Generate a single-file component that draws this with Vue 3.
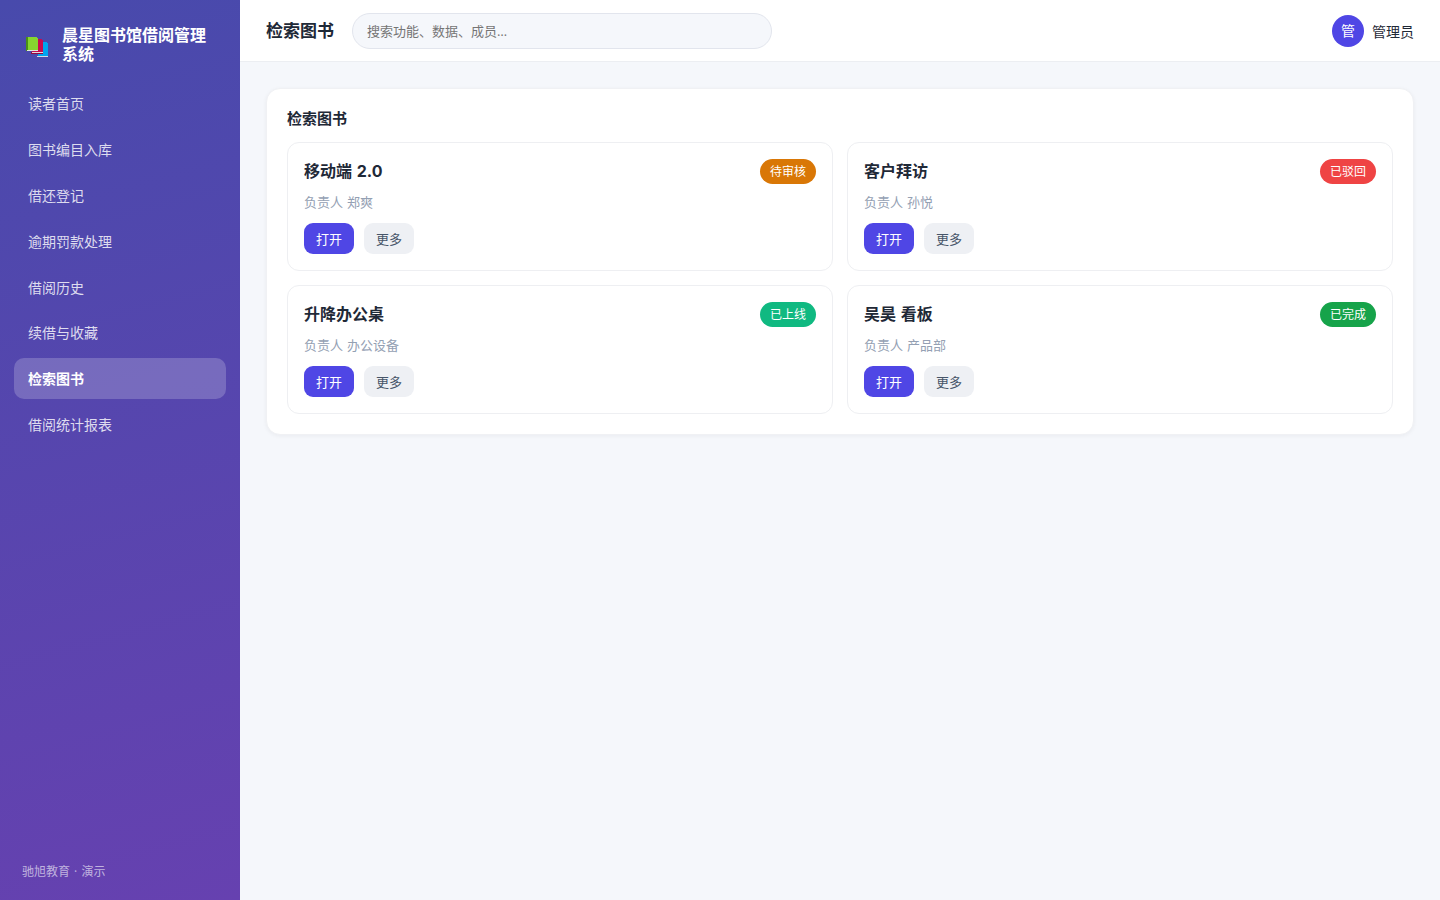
<template>
  <div class="layout">
    <aside class="sidebar">
      <div class="brand">
        <svg class="brand-logo" viewBox="0 0 22 20" width="22" height="20" shape-rendering="crispEdges">
          <path d="M12 5h9v1h1v13H12z" fill="#00a4ef"/>
          <path d="M11 19h11v1H11z" fill="#d5d9e2"/>
          <path d="M6 2h10v1h1v12H6z" fill="#c80a50"/>
          <path d="M5 15h12v2H5z" fill="#930b3d"/>
          <path d="M6 15h11v1H6z" fill="#e2dadd"/>
          <path d="M0 0h2v14H0z" fill="#498f16"/>
          <path d="M2 0h9v1h1v13H2z" fill="#86d62f"/>
          <path d="M1 13h11v1H1z" fill="#e3e8e1"/>
        </svg>
        <span class="brand-name">晨星图书馆借阅管理系统</span>
      </div>
      <nav class="menu">
        <a v-for="m in menus" :key="m" class="menu-item" :class="{ active: m === current }" @click="current = m">{{ m }}</a>
      </nav>
      <div class="sidebar-foot">驰旭教育 · 演示</div>
    </aside>

    <div class="main">
      <header class="topbar">
        <h1 class="topbar-title">{{ current }}</h1>
        <input v-model="keyword" class="search" placeholder="搜索功能、数据、成员…" />
        <div class="user">
          <span class="avatar">管</span>
          <span class="user-name">管理员</span>
        </div>
      </header>

      <main class="content">
        <section class="panel">
          <h2 class="panel-title">{{ current }}</h2>
          <div class="grid">
            <article v-for="c in cards" :key="c.name" class="card">
              <div class="card-head">
                <h3 class="card-name">{{ c.name }}</h3>
                <span class="tag" :class="c.type">{{ c.status }}</span>
              </div>
              <p class="card-owner">负责人 {{ c.owner }}</p>
              <div class="card-actions">
                <button class="btn primary">打开</button>
                <button class="btn">更多</button>
              </div>
            </article>
          </div>
        </section>
      </main>
    </div>
  </div>
</template>

<script setup>
import { ref } from 'vue'

const menus = ['读者首页', '图书编目入库', '借还登记', '逾期罚款处理', '借阅历史', '续借与收藏', '检索图书', '借阅统计报表']
const current = ref('检索图书')
const keyword = ref('')

const cards = [
  { name: '移动端 2.0', owner: '郑爽', status: '待审核', type: 'pending' },
  { name: '客户拜访', owner: '孙悦', status: '已驳回', type: 'rejected' },
  { name: '升降办公桌', owner: '办公设备', status: '已上线', type: 'online' },
  { name: '吴昊 看板', owner: '产品部', status: '已完成', type: 'done' },
]
</script>

<style>
body { margin: 0; }
</style>

<style scoped>
.layout {
  display: flex;
  height: 100vh;
  overflow: hidden;
  font-family: "Open Sans", "Noto Sans CJK SC", sans-serif;
  font-size: 14px;
  color: #1f2937;
  background: #f5f7fb;
}
.layout * { box-sizing: border-box; }

.sidebar {
  flex: 0 0 240px;
  display: flex;
  flex-direction: column;
  padding: 26px 14px 18px;
  color: #fff;
  background: linear-gradient(165deg, #484aac 0%, #6641b0 100%);
}
.brand {
  display: flex;
  align-items: center;
  gap: 14px;
  height: 38px;
  padding: 0 12px;
}
.brand-logo { flex: none; margin-top: 4px; }
.brand-name { font-size: 16px; font-weight: 700; line-height: 19px; }
.menu {
  display: flex;
  flex-direction: column;
  gap: 4.8px;
  margin-top: 19.4px;
}
.menu-item {
  height: 41px;
  padding: 0 14px;
  border-radius: 10px;
  line-height: 41px;
  color: rgba(255, 255, 255, 0.82);
  cursor: pointer;
}
.menu-item.active {
  color: #fff;
  font-weight: 700;
  background: rgba(255, 255, 255, 0.2);
}
.sidebar-foot {
  margin-top: auto;
  padding-left: 8px;
  font-size: 12px;
  line-height: 20px;
  word-spacing: 1px;
  color: rgba(255, 255, 255, 0.6);
}

.main { flex: 1; min-width: 0; }
.topbar {
  display: flex;
  align-items: center;
  height: 62px;
  padding: 0 26px;
  background: #fff;
  border-bottom: 1px solid #eceef2;
}
.topbar-title { margin: 0; font-size: 17px; line-height: 24px; font-weight: 700; }
.search {
  width: 420px;
  height: 36px;
  margin-left: 18px;
  padding: 0 14px;
  border: 1px solid #e2e5ed;
  border-radius: 18px;
  outline: none;
  font-family: inherit;
  font-size: 13px;
  background: #f5f7fb;
}
.search::placeholder { color: #757575; }
.user {
  display: flex;
  align-items: center;
  gap: 8px;
  margin-left: auto;
}
.avatar {
  width: 32px;
  height: 32px;
  border-radius: 50%;
  line-height: 32px;
  text-align: center;
  color: #fff;
  background: #4f46e5;
}

.content { padding: 26px; }
.panel {
  padding: 19px 20px 20px;
  border: 1px solid #f0f1f4;
  border-radius: 14px;
  background: #fff;
  box-shadow: 0 1px 4px rgba(16, 24, 40, 0.05);
}
.panel-title { margin: 0 0 14px; font-size: 15px; line-height: 20px; font-weight: 700; }
.grid {
  display: grid;
  grid-template-columns: 1fr 1fr;
  gap: 14px;
}
.card {
  height: 129px;
  padding: 16px;
  border: 1px solid #eeeff2;
  border-radius: 12px;
}
.card-head {
  display: flex;
  align-items: center;
  justify-content: space-between;
  height: 25px;
}
.card-name {
  margin: 0;
  font-family: Inter, "Noto Sans CJK SC", sans-serif;
  font-size: 16px;
  line-height: 25px;
  font-weight: 700;
  word-spacing: 1px;
}
.tag {
  height: 25px;
  padding: 0 10px;
  border-radius: 13px;
  font-size: 12px;
  line-height: 25px;
  color: #fff;
}
.tag.pending { background: #d97706; }
.tag.rejected { background: #ef4444; }
.tag.online { background: #10b981; }
.tag.done { background: #16a34a; }
.card-owner {
  margin: 8px 0 11px;
  font-size: 13px;
  line-height: 20px;
  word-spacing: 0.5px;
  color: #94a0b3;
}
.card-actions { display: flex; gap: 10px; }
.btn {
  width: 50px;
  height: 31px;
  padding: 0 0 1px;
  border: 0;
  border-radius: 9px;
  font-family: inherit;
  font-size: 13px;
  color: #475569;
  background: #eef0f4;
  cursor: pointer;
}
.btn.primary { color: #fff; background: #4f46e5; }
</style>
